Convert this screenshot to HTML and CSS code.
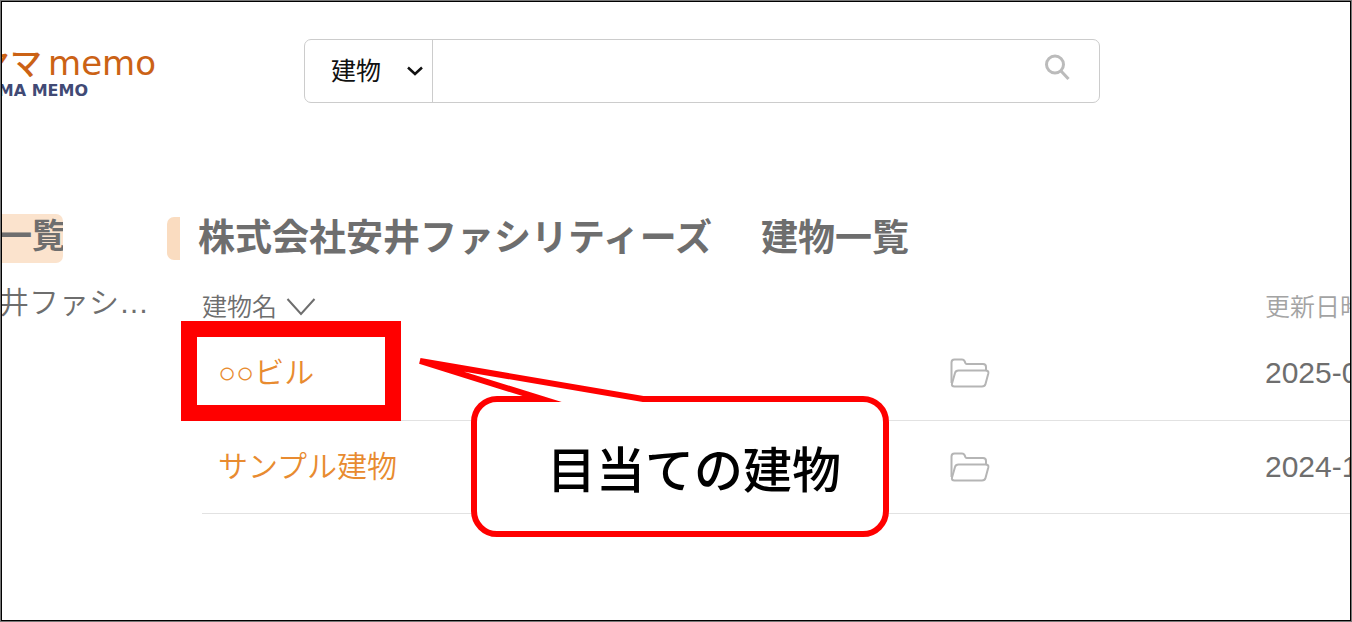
FILE: index.html
```html
<!DOCTYPE html>
<html lang="ja">
<head>
<meta charset="utf-8">
<title>ヤマmemo 建物一覧</title>
<link rel="stylesheet" href="styles.css">
</head>
<body>
<div class="frame">
  <header class="header">
    <a class="logo" href="#">
      <span class="logo-main"><span class="logo-kana">ヤマ</span>memo</span>
      <span class="logo-sub">MA MEMO</span>
    </a>
    <form class="search">
      <div class="kind">
        <select class="kind-select" aria-label="検索対象"><option>建物</option></select>
        <svg class="kind-arrow" viewBox="0 0 18 12" aria-hidden="true"><path d="M2 2.500 L9 9 L16 2.500"/></svg>
      </div>
      <input class="search-input" type="text" aria-label="検索">
      <button class="search-button" type="button" aria-label="検索する">
        <svg class="search-icon" viewBox="0 0 26 28" aria-hidden="true"><circle cx="10" cy="10.500" r="8.500"/><path d="M16 17 L23.500 25"/></svg>
      </button>
    </form>
  </header>
  <div class="content">
    <nav class="sidebar">
      <a class="side-title" href="#"><span>一覧</span></a>
      <a class="side-item" href="#">井ファシ…</a>
    </nav>
    <main class="main">
      <h1 class="title">株式会社安井ファシリティーズ　<span class="title-part">建物一覧</span></h1>
      <table class="list">
        <colgroup><col class="col-name"><col class="col-folder"><col class="col-date"></colgroup>
        <thead>
          <tr>
            <th><button class="sort" type="button">建物名<svg class="sort-icon" viewBox="0 0 30 20" aria-hidden="true"><path d="M1.500 2 L15 17 L28.500 2"/></svg></button></th>
            <th></th>
            <th class="date-head">更新日時</th>
          </tr>
        </thead>
        <tbody>
          <tr>
            <td><a class="name" href="#">○○ビル</a></td>
            <td><svg class="folder" viewBox="0 0 40 30" aria-hidden="true"><path d="M1.500 25 V4.500 Q1.500 1.500 4.500 1.500 H12 Q13.800 1.500 14.500 3 L15.500 5.200 Q16 6 17 6 H33 Q36 6 36 9 V12.500"/><path d="M8.500 12.500 H35.500 Q39 12.500 38.300 15.500 L35.500 26 Q34.800 28.500 32 28.500 H4.500 Q1.300 28.500 2 25.500 L5 15 Q5.700 12.500 8.500 12.500 Z"/></svg></td>
            <td class="date">2025-0</td>
          </tr>
          <tr>
            <td><a class="name" href="#">サンプル建物</a></td>
            <td><svg class="folder" viewBox="0 0 40 30" aria-hidden="true"><path d="M1.500 25 V4.500 Q1.500 1.500 4.500 1.500 H12 Q13.800 1.500 14.500 3 L15.500 5.200 Q16 6 17 6 H33 Q36 6 36 9 V12.500"/><path d="M8.500 12.500 H35.500 Q39 12.500 38.300 15.500 L35.500 26 Q34.800 28.500 32 28.500 H4.500 Q1.300 28.500 2 25.500 L5 15 Q5.700 12.500 8.500 12.500 Z"/></svg></td>
            <td class="date">2024-1</td>
          </tr>
        </tbody>
      </table>
    </main>
  </div>
  <div class="highlight"></div>
  <div class="callout">
    <svg class="callout-shape" viewBox="0 0 474 182" aria-hidden="true"><path d="M82 43 H127 L5 5 L228 43 H448 A23 23 0 0 1 471 66 V155 A23 23 0 0 1 448 178 H82 A23 23 0 0 1 59 155 V66 A23 23 0 0 1 82 43 Z"/></svg>
    <p class="callout-text">目当ての建物</p>
  </div>
</div>
</body>
</html>
```
FILE: styles.css
```css
* { box-sizing: border-box; }
body {
  margin: 0;
  background: #fff;
  color: #6e6e6e;
  font-family: "Liberation Sans", "Noto Sans CJK JP", sans-serif;
}
a { color: inherit; text-decoration: none; }
button, input, select { font: inherit; color: inherit; background: none; border: 0; margin: 0; padding: 0; }
svg { display: block; fill: none; }
.frame {
  position: relative;
  min-height: 100vh;
  overflow: hidden;
  border: 1px solid #777;
  padding: 1px;
}
.frame::after {
  content: "";
  position: absolute;
  inset: 0;
  border: 1px solid #000;
  pointer-events: none;
}
.header {
  display: flex;
  align-items: flex-start;
  padding: 37px 250px 0 0;
}
.logo {
  display: flex;
  flex-direction: column;
  width: 154px;
  margin-right: 148px;
  padding-top: 2px;
  overflow: hidden;
  white-space: nowrap;
}
.logo-main {
  display: flex;
  align-items: baseline;
  align-self: flex-end;
  font: 34px/40px "DejaVu Sans", "Noto Sans CJK JP", sans-serif;
  color: #cb6215;
}
.logo-kana {
  margin-right: 6px;
  font-family: "Noto Sans CJK JP", sans-serif;
  font-size: 32px;
  font-weight: 500;
}
.logo-sub {
  align-self: flex-end;
  margin-right: 68px;
  font: bold 16px/16px "DejaVu Sans", sans-serif;
  color: #414a75;
}
.search {
  flex: 1;
  display: flex;
  height: 64px;
  border: 1px solid #ccc;
  border-radius: 7px;
}
.kind {
  display: grid;
  width: 128px;
  align-items: center;
  border-right: 1px solid #ccc;
}
.kind-select {
  grid-area: 1 / 1;
  height: 60px;
  padding-left: 26px;
  appearance: none;
  font-size: 25px;
  color: #111;
}
.kind-arrow {
  grid-area: 1 / 1;
  justify-self: end;
  width: 18px;
  margin-right: 8px;
  stroke: #111;
  stroke-width: 2.5;
  pointer-events: none;
}
.search-input { flex: 1; min-width: 0; font-size: 25px; }
.search-button { width: 54px; padding-bottom: 6px; }
.search-icon { width: 26px; stroke: #bbb; stroke-width: 3; }
.content { display: flex; }
.sidebar { width: 165px; padding-top: 111px; overflow: hidden; }
.side-title {
  display: flex;
  justify-content: flex-start;
  width: 61px;
  height: 49px;
  overflow: hidden;
  border-radius: 0 7px 7px 0;
  background: #fbe3cd;
  font-size: 34px;
  font-weight: bold;
  line-height: 44px;
  white-space: nowrap;
}
.side-title span { margin-left: -4px; }
.side-item {
  display: flex;
  justify-content: flex-end;
  width: 147px;
  margin-top: 20px;
  font-size: 30px;
  font-weight: 350;
  line-height: 40px;
  white-space: nowrap;
}
.main { flex: 1; min-width: 0; padding-top: 114px; overflow: hidden; }
.title {
  display: flex;
  align-items: center;
  height: 43px;
  margin: 0;
  font-size: 37px;
  line-height: 43px;
  white-space: nowrap;
}
.title::before {
  content: "";
  width: 13px;
  height: 43px;
  margin-right: 18px;
  border-radius: 7px 0 0 7px;
  background: #fadcc0;
}
.title-part { margin-left: 12px; }
.list {
  width: calc(100% - 35px);
  margin: 20px 0 0 35px;
  table-layout: fixed;
  border-collapse: collapse;
}
.col-folder { width: 315px; }
.col-date { width: 85px; }
th {
  height: 47px;
  padding: 6px 0 0;
  font-size: 25px;
  font-weight: 350;
  line-height: 40px;
  text-align: left;
  vertical-align: middle;
  white-space: nowrap;
}
.sort { display: flex; align-items: center; gap: 9px; }
.sort-icon { width: 30px; stroke: #6e6e6e; stroke-width: 2; }
.date-head { color: #a3a3a3; }
td {
  height: 93px;
  padding: 0;
  border-bottom: 1px solid #e2e2e2;
  font-size: 30px;
  line-height: 40px;
  white-space: nowrap;
}
.name { padding-left: 16px; font-weight: 350; color: #e88b30; }
.folder { width: 40px; stroke: #b5b5b5; stroke-width: 2; }
.highlight {
  position: absolute;
  left: 180px;
  top: 320px;
  width: 220px;
  height: 100px;
  border: 16px solid #f00;
}
.callout {
  position: absolute;
  left: 414px;
  top: 355px;
  width: 474px;
  height: 182px;
}
.callout-shape { width: 100%; fill: #fff; stroke: #f00; stroke-width: 6; stroke-miterlimit: 8; }
.callout-text {
  position: absolute;
  inset: 46px 0 0 132px;
  margin: 0;
  font-size: 49px;
  font-weight: 500;
  line-height: 138px;
  color: #000;
  white-space: nowrap;
}
```
